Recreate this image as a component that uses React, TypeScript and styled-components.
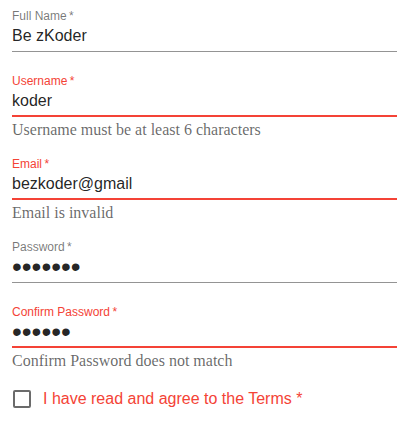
import React from 'react';
import styled, { createGlobalStyle } from 'styled-components';

const GlobalStyle = createGlobalStyle`
  html, body {
    margin: 0;
    padding: 0;
    background: #ffffff;
  }
`;

const red = '#f44336';

const Form = styled.form`
  width: 385px;
  padding: 9px 7px 0 12px;
  display: flex;
  flex-direction: column;
  font-family: "Liberation Sans", Arial, sans-serif;
`;

const Group = styled.div<{ $hasHelper: boolean }>`
  display: flex;
  flex-direction: column;
  margin-bottom: ${(p) => (p.$hasHelper ? 18 : 22)}px;
`;

const Label = styled.label<{ $error: boolean }>`
  font-size: 12px;
  line-height: 14px;
  height: 14px;
  color: ${(p) => (p.$error ? red : 'rgba(0, 0, 0, 0.54)')};
`;

const InputWrap = styled.div<{ $error: boolean }>`
  margin-top: 3px;
  padding-bottom: ${(p) => (p.$error ? 5 : 6)}px;
  border-bottom: ${(p) => (p.$error ? `2px solid ${red}` : '1px solid rgba(0, 0, 0, 0.42)')};
`;

const Input = styled.input<{ $secret: boolean }>`
  display: block;
  width: 100%;
  height: 19px;
  margin: 0;
  padding: 0;
  border: 0;
  outline: none;
  background: transparent;
  font-family: "Liberation Sans", Arial, sans-serif;
  font-size: ${(p) => (p.$secret ? 28 : 16)}px;
  line-height: 19px;
  color: rgba(0, 0, 0, 0.87);
`;

const Helper = styled.div`
  margin-top: 4px;
  font-family: "Liberation Serif", "Times New Roman", serif;
  font-size: 16px;
  line-height: 18px;
  color: rgba(0, 0, 0, 0.6);
`;

const CheckRow = styled.label`
  display: flex;
  align-items: center;
  gap: 12px;
  margin-top: 2px;
  padding-left: 1px;
  font-size: 16px;
  line-height: 18px;
  color: ${red};
`;

const Box = styled.span`
  width: 18px;
  height: 18px;
  box-sizing: border-box;
  border: 2px solid rgba(0, 0, 0, 0.58);
  border-radius: 2px;
`;

type FieldProps = {
  label: string;
  value: string;
  type?: string;
  error?: string;
  invalid?: boolean;
};

const Field = ({ label, value, type = 'text', error, invalid }: FieldProps) => {
  const isError = Boolean(error) || Boolean(invalid);
  return (
    <Group $hasHelper={Boolean(error)}>
      <Label $error={isError}>{label}&thinsp;*</Label>
      <InputWrap $error={isError}>
        <Input type={type} value={value} $secret={type === 'password'} readOnly />
      </InputWrap>
      {error && <Helper>{error}</Helper>}
    </Group>
  );
};

const App = () => {
  return (
    <>
      <GlobalStyle />
      <Form onSubmit={(e) => e.preventDefault()}>
        <Field label="Full Name" value="Be zKoder" />
        <Field label="Username" value="koder" error="Username must be at least 6 characters" />
        <Field label="Email" value="bezkoder@gmail" error="Email is invalid" />
        <Field label="Password" value="1234567" type="password" />
        <Field
          label="Confirm Password"
          value="123456"
          type="password"
          error="Confirm Password does not match"
        />
        <CheckRow>
          <Box />
          I have read and agree to the Terms *
        </CheckRow>
      </Form>
    </>
  );
};

export default App;
